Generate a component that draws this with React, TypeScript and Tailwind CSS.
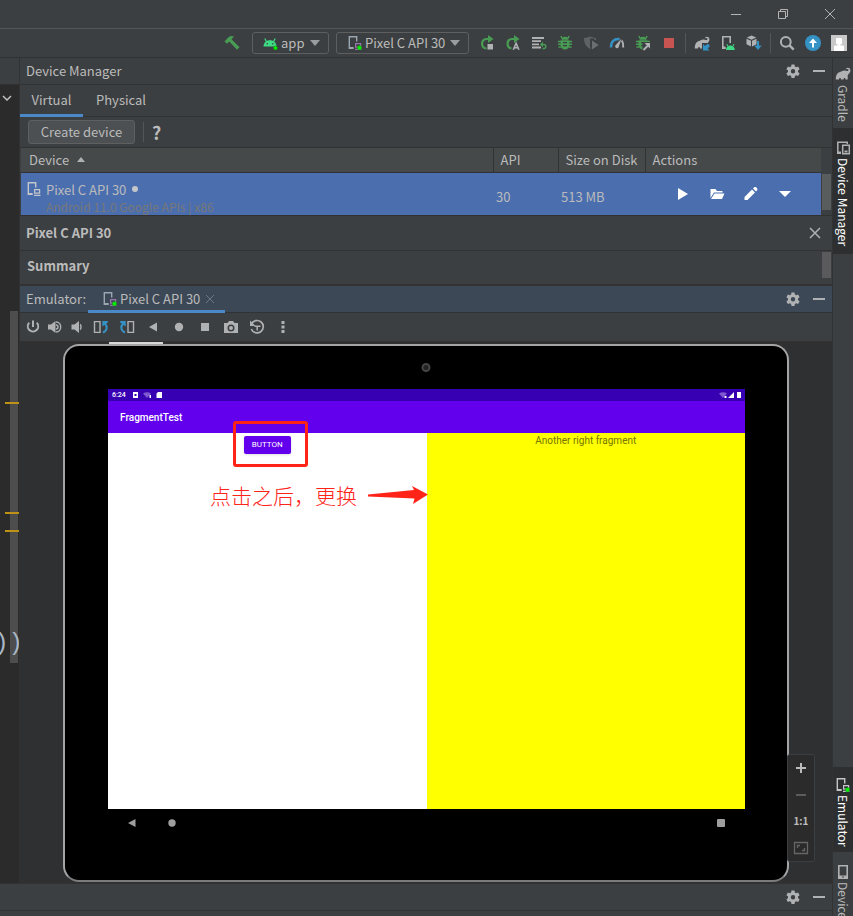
import type { ReactNode } from "react";

type IconProps = { children: ReactNode; className?: string };

function Icon({ children, className = "size-4" }: IconProps) {
  return (
    <svg viewBox="0 0 16 16" className={`${className} shrink-0`} fill="none" aria-hidden="true">
      {children}
    </svg>
  );
}

function IconButton({ label, children }: { label: string; children: ReactNode }) {
  return (
    <button type="button" aria-label={label} className="flex shrink-0 items-center justify-center">
      {children}
    </button>
  );
}

const GearIcon = () => (
  <Icon>
    <path
      fill="#afb1b3"
      fillRule="evenodd"
      d="M6.500 1.500h3l.4 2.100 1.200.7 2-.7 1.500 2.600-1.600 1.400v1.400l1.600 1.400-1.500 2.600-2-.7-1.200.7-.4 2.100h-3L6.100 13l-1.200-.7-2 .7-1.500-2.600L3 9V7.600L1.400 6.200l1.500-2.600 2 .7 1.200-.7zM8 6a2.200 2.200 0 1 0 0 4.400A2.200 2.200 0 0 0 8 6z"
    />
  </Icon>
);

const MinusIcon = () => (
  <Icon>
    <path fill="#afb1b3" d="M2 7h12v2H2z" />
  </Icon>
);

const PhoneIcon = ({ running = false, light = false }: { running?: boolean; light?: boolean }) => (
  <Icon>
    <path
      stroke={light ? "#c4c6c9" : "#9aa7b0"}
      strokeWidth="1.400"
      d="M6.500 13.200H2.300V1.800h7.400v4.700"
    />
    <path fill={light ? "#c4c6c9" : "#9aa7b0"} d="M2 12h4.500v1.900H2z" />
    <path stroke={light ? "#c4c6c9" : "#9876aa"} strokeWidth="1.200" d="M8.600 8.600h5v3.600h-5zM8 14.400h6.500" />
    {running && <circle cx="12.500" cy="12.800" r="2.200" fill="#00f400" stroke="#1c6b1c" strokeWidth=".4" />}
  </Icon>
);

const DevicesIcon = () => (
  <Icon>
    <path stroke="#afb1b3" strokeWidth="1.500" d="M6 13H2.800V2.300h9.400V4" />
    <path fill="#afb1b3" d="M2 11.500h4V14H2z" />
    <path stroke="#afb1b3" strokeWidth="1.500" d="M7.700 5.200h6.600v8.600H7.700z" />
    <path fill="#afb1b3" d="M9.500 10.500h3v2h-3z" />
  </Icon>
);

const elephantPath =
  "M.8 13.500c0-3.800 1.200-7 4.700-7.700 1.300-.3 2-1.300 3.700-1.300 1.600 0 2.600 1 3.600.4.800-.5.900-1.700.2-1.900-.5-.2-.9.1-1.200.5l-.8-.7C12 1.300 15.400 1.400 15.400 4.500c0 3-2.600 3.300-2.700 5.500v3.500h-2.200c0-1-.4-1.600-1-1.600s-1 .6-1 1.600H6c0-1-.4-1.600-1-1.600s-1 .6-1 1.600z";

const Caret = ({ color }: { color: string }) => (
  <svg viewBox="0 0 10 6" className="h-1.5 w-2.5 shrink-0" fill={color} aria-hidden="true">
    <path d="M0 0h10L5 6z" />
  </svg>
);

const BugShape = () => (
  <>
    <path fill="#499c54" d="M4.500 4.800C4.500 2.800 6 1.800 8 1.800s3.500 1 3.500 3zM3.700 5.300h8.600V10c0 2.700-1.800 4.500-4.300 4.500S3.700 12.700 3.700 10z" />
    <path
      stroke="#499c54"
      strokeWidth="1.500"
      d="M5.300 3.500 3.900 1M10.700 3.500l1.400-2.500M4.300 6.500H1M4.300 9.200H1M4.500 12H1.500M11.700 6.500H15M11.700 9.200H15M11.500 12h3"
    />
    <path stroke="#3c3f41" strokeWidth="1.200" d="M6 7.600h4M6 10.600h4" />
  </>
);

function WindowControls() {
  const control = "flex h-7 w-[47px] items-center justify-center";
  return (
    <header className="flex h-[29px] shrink-0 justify-end border-b border-[#555555]">
      <button type="button" aria-label="Minimize" className={control}>
        <svg viewBox="0 0 12 12" className="size-3" stroke="#b4b4b4"><path d="M1 6.500h10" /></svg>
      </button>
      <button type="button" aria-label="Restore" className={control}>
        <svg viewBox="0 0 12 12" className="size-3" stroke="#b4b4b4" fill="none">
          <path d="M1.500 3.500h7v7h-7zM3.500 3V1.500h7v7H9" />
        </svg>
      </button>
      <button type="button" aria-label="Close" className={control}>
        <svg viewBox="0 0 12 12" className="size-3" stroke="#b4b4b4"><path d="m1 1 10 10M11 1 1 11" /></svg>
      </button>
    </header>
  );
}

function Toolbar() {
  const combo = "flex h-[22px] items-center rounded-[3px] border border-[#5e6060]";
  return (
    <div className="flex h-[29px] shrink-0 items-center justify-end border-b border-[#323232] pr-1.5">
      <IconButton label="Build">
        <Icon>
          <path fill="#499c54" d="M.5 6.500 5 1.800c1.500-1.200 3.500-1 5-.2L7.500 4.300l8 7.900-2.500 2.600-7.700-8.200L3 8.800z" />
        </Icon>
      </IconButton>
      <button type="button" className={`${combo} ml-3 w-[77px] pl-[9px]`}>
        <Icon>
          <path fill="#3ddc84" d="M1.500 11.500C1.700 7.800 4.300 5.300 8 5.300s6.300 2.500 6.500 6.200z" />
          <path stroke="#3ddc84" strokeWidth="1.200" d="M4.600 7 2.800 3.500M11.400 7l1.800-3.500" />
          <circle cx="5.200" cy="8.700" r=".8" fill="#3c3f41" />
          <circle cx="10.800" cy="8.700" r=".8" fill="#3c3f41" />
          <circle cx="13.500" cy="13" r="2" fill="#00f400" stroke="#1c6b1c" strokeWidth=".4" />
        </Icon>
        <span className="ml-[3px]">app</span>
        <span className="mr-2 ml-auto"><Caret color="#9a9da0" /></span>
      </button>
      <button type="button" className={`${combo} ml-[7px] w-[133px] pl-[10px]`}>
        <PhoneIcon running />
        <span className="ml-0.5 whitespace-nowrap">Pixel C API 30</span>
        <span className="mr-2 ml-auto"><Caret color="#9a9da0" /></span>
      </button>
      <div className="ml-[10px] flex items-center gap-2">
        <div className="flex items-center gap-[10px]">
          <IconButton label="Apply changes and restart">
            <Icon>
              <path stroke="#499c54" strokeWidth="2.200" d="M7.500 13.500a4.800 4.800 0 0 1-.5-9.500H10" />
              <path fill="#499c54" d="M9 0l5.500 4L9 8z" />
              <path fill="#afb1b3" d="M8.500 9H14v5.500H8.500z" />
            </Icon>
          </IconButton>
          <IconButton label="Apply code changes">
            <Icon>
              <path stroke="#499c54" strokeWidth="2.200" d="M6.500 13.500A4.800 4.800 0 0 1 7 4h3" />
              <path fill="#499c54" d="M9 0l5.500 4L9 8z" />
              <path stroke="#afb1b3" strokeWidth="1.600" d="m8.300 14.700 2.800-6.500 2.800 6.500M9.500 12.700h3.500" />
            </Icon>
          </IconButton>
          <IconButton label="Run lines">
            <Icon>
              <path fill="#afb1b3" d="M1 2h12v1.900H1zM1 5.200h9v1.900H1zM1 8.400h7v1.900H1zM1 11.600h9v1.900H1z" />
              <path stroke="#499c54" strokeWidth="1.400" d="M10.500 9.500h2.300a2 2 0 0 1 0 4H11.500" />
              <path fill="#499c54" d="M12 6.800v5.400L8.900 9.500z" />
            </Icon>
          </IconButton>
          <IconButton label="Debug"><Icon><BugShape /></Icon></IconButton>
          <IconButton label="Run with coverage">
            <Icon>
              <path fill="#5f6264" d="M1 3c3 0 4-1 6-1.500C9 2 10.500 3 13 3v2H8v9C3.500 12.500 1 9 1 3z" />
              <path fill="#3c3f41" d="M7 3.500h4.500V5H8v7.500H7z" />
              <path fill="#6c6f71" d="m9 5.500 6.700 4.500L9 14.500z" />
            </Icon>
          </IconButton>
          <IconButton label="Profile">
            <Icon>
              <path stroke="#3592c4" strokeWidth="2.400" d="M2 12.500C1.800 6.500 5 3.500 10.500 4" />
              <path fill="#afb1b3" d="M12.500 3.500 9.500 12.500a1.900 1.900 0 0 1-3.300-1.700z" />
              <path stroke="#afb1b3" strokeWidth="2" d="M12.800 5.500c1.300 1.800 1.600 4 1.400 7" />
            </Icon>
          </IconButton>
          <IconButton label="Attach debugger">
            <Icon>
              <BugShape />
              <path fill="#3c3f41" d="M7.500 7H16v9H7.500z" />
              <path stroke="#afb1b3" strokeWidth="2" d="m8.500 15 5-5" />
              <path fill="#afb1b3" d="M9.500 8H15v5.500z" />
            </Icon>
          </IconButton>
          <IconButton label="Stop"><Icon><path fill="#c75450" d="M3 3h10v10H3z" /></Icon></IconButton>
        </div>
        <div className="h-5 w-px bg-[#555555]" />
        <div className="flex items-center gap-[10px]">
          <IconButton label="Sync project">
            <Icon>
              <path fill="#afb1b3" d={elephantPath} />
              <path fill="#3c3f41" d="M8 8h8v8H8z" />
              <path fill="#3592c4" d="M9 9v6.500h6.500L13.600 13.600 16 11 13.800 8.700 11 11z" />
            </Icon>
          </IconButton>
          <IconButton label="Device manager">
            <Icon>
              <path stroke="#afb1b3" strokeWidth="1.600" d="M5.500 13.200H2.800V1.800h7.400V8" />
              <path fill="#afb1b3" d="M2 11.500h3.500V14H2z" />
              <path fill="#3ddc84" d="M6 15c.2-3 1.800-4.500 4.300-4.500s4.300 1.500 4.500 4.500z" />
              <path stroke="#3ddc84" d="m8 11.500-1.200-2.500M12.800 11.500 14 9" />
            </Icon>
          </IconButton>
          <IconButton label="SDK manager">
            <Icon>
              <path fill="#afb1b3" d="m5.500.5 4.700 2-4.700 2.200-4.700-2.200zM.5 3.700 5 5.700v5.800L.5 9.300zM10.500 3.700 6 5.700v5.800l4.500-2.200z" />
              <path stroke="#3592c4" strokeWidth="2" d="M12 6v6.500" />
              <path fill="#3592c4" d="M8.300 10.500h7.400L12 15z" />
            </Icon>
          </IconButton>
        </div>
        <div className="h-5 w-px bg-[#555555]" />
        <div className="flex items-center gap-[10px]">
          <IconButton label="Search">
            <Icon>
              <circle cx="6.800" cy="6.800" r="4.900" stroke="#afb1b3" strokeWidth="2" />
              <path stroke="#afb1b3" strokeWidth="2.400" d="m10.200 10.200 4.500 4.500" />
            </Icon>
          </IconButton>
          <IconButton label="Update">
            <Icon>
              <circle cx="8" cy="8" r="8" fill="#3592c4" />
              <path fill="#fff" d="M8 3.500 12 8H9v4.500H7V8H4z" />
            </Icon>
          </IconButton>
          <IconButton label="Account">
            <Icon>
              <path fill="#c9c9c9" d="M0 0h16v16H0z" />
              <path fill="#fff" d="M5 4a1 1 0 0 1 1-1h4a1 1 0 0 1 1 1v5H9.500v1.500H12a1 1 0 0 1 1 1V16H3v-4.500a1 1 0 0 1 1-1h2.500V9H5z" />
            </Icon>
          </IconButton>
        </div>
      </div>
    </div>
  );
}

function EditorGutter() {
  const mark = "absolute right-0 h-0.5 w-3.5 bg-[#be9117]";
  return (
    <aside className="flex w-5 shrink-0 flex-col border-r border-[#323232]">
      <div className="h-[27px] shrink-0 border-b border-[#323232]" />
      <div className="relative grow overflow-hidden bg-[#2b2b2b]">
        <svg viewBox="0 0 10 6" className="mt-[10px] ml-0.5 h-1.5 w-2.5" fill="none" aria-hidden="true">
          <path stroke="#c0c0c0" strokeWidth="1.500" d="m1 1 4 4 4-4" />
        </svg>
        <div className="absolute top-[226px] right-px h-[352px] w-2 bg-[#4d4d4d]" />
        <div className={`${mark} top-[317px]`} />
        <div className={`${mark} top-[427px]`} />
        <div className={`${mark} top-[445px]`} />
        <span className="absolute top-[543px] -right-1 font-['Liberation_Mono'] text-2xl leading-8 text-[#a9b7c6]">
          ))
        </span>
      </div>
    </aside>
  );
}

function PanelActions() {
  return (
    <div className="mr-[5px] ml-auto flex items-center gap-[10px]">
      <IconButton label="Settings"><GearIcon /></IconButton>
      <IconButton label="Hide"><MinusIcon /></IconButton>
    </div>
  );
}

function DeviceManager() {
  const head = "h-6 border-l border-[#323232] pl-[7px] text-left font-normal";
  const tab = "h-8 border-b-3";
  return (
    <section className="shrink-0">
      <div className="flex h-[27px] items-center border-b border-[#323232] pl-1.5">
        <h2>Device Manager</h2>
        <PanelActions />
      </div>
      <div className="flex h-8 border-b border-[#323232]">
        <button type="button" className={`${tab} w-[63px] border-[#4a88c7]`}>Virtual</button>
        <button type="button" className={`${tab} border-transparent px-[13px]`}>Physical</button>
      </div>
      <div className="flex h-[31px] items-center border-b border-[#323232] pl-2">
        <button
          type="button"
          className="h-6 w-[107px] rounded-[3px] border border-[#5e6060] bg-[#4c5052] leading-5"
        >
          Create device
        </button>
        <div className="ml-2 h-5 w-px bg-[#555555]" />
        <button type="button" className="ml-2 text-lg font-semibold">?</button>
      </div>
      <div className="flex border-b border-[#323232] pl-px">
        <table className="grow table-fixed border-collapse">
          <colgroup>
            <col />
            <col className="w-[65px]" />
            <col className="w-[87px]" />
            <col className="w-[176px]" />
          </colgroup>
          <thead>
            <tr className="border-b border-[#323232] bg-[#45494a]">
              <th className="h-6 pl-2 text-left font-normal">
                <span className="flex items-center gap-2">
                  Device
                  <svg viewBox="0 0 8 5" className="h-[5px] w-2" fill="#afb1b3"><path d="M4 0 8 5H0z" /></svg>
                </span>
              </th>
              <th className={head}>API</th>
              <th className={`${head} whitespace-nowrap`}>Size on Disk</th>
              <th className={head}>Actions</th>
            </tr>
          </thead>
          <tbody>
            <tr className="bg-[#4b6eaf]">
              <td className="h-[43px] pl-[5px]">
                <div className="flex items-start gap-1 pt-2">
                  <PhoneIcon light />
                  <div>
                    <div className="flex items-center gap-1.5 leading-[17px]">
                      Pixel C API 30
                      <span className="size-1.5 rounded-full bg-[#c4c6c9]" />
                    </div>
                    <div className="text-xs leading-[17px] text-[#787878]">Android 11.0 Google APIs | x86</div>
                  </div>
                </div>
              </td>
              <td className="pt-1.5 pl-[3px]">30</td>
              <td className="pt-1.5 pl-[3px]">513 MB</td>
              <td>
                <div className="flex items-center gap-[18px] pl-[30px]">
                  <IconButton label="Launch">
                    <Icon><path fill="#fff" d="M3 2v12l10-6z" /></Icon>
                  </IconButton>
                  <IconButton label="Show on disk">
                    <Icon>
                      <path fill="#fff" d="M1.500 3h5L8 5h5.500v1.500H5L1.500 12zM5.500 7.500H15.500L13 13H2z" />
                    </Icon>
                  </IconButton>
                  <IconButton label="Edit">
                    <Icon>
                      <path fill="#fff" d="M1.500 11 9 3.500 12 6.500 4.500 14H1.500zM10 2.500l1.200-1.200c1.500-1 4 1.200 3 3L13 5.500z" />
                    </Icon>
                  </IconButton>
                  <IconButton label="More actions">
                    <Icon><path fill="#fff" d="M2 5h12l-6 6z" /></Icon>
                  </IconButton>
                </div>
              </td>
            </tr>
          </tbody>
        </table>
        <div className="w-[11px] shrink-0 px-px pt-[26px]">
          <div className="h-9 bg-[#5a5d5e]" />
        </div>
      </div>
      <div className="flex h-[35px] items-center justify-between border-b border-[#323232] pr-[9px] pl-1.5 font-bold">
        <h3>Pixel C API 30</h3>
        <IconButton label="Close details">
          <Icon><path stroke="#afb1b3" strokeWidth="1.500" d="m3 3 10 10M13 3 3 13" /></Icon>
        </IconButton>
      </div>
      <div className="flex h-[35px] justify-between border-b-2 border-[#323232] pt-px pr-px pl-[7px]">
        <h3 className="pt-1 font-bold">Summary</h3>
        <div className="h-[26px] w-[9px] bg-[#5a5a5c]" />
      </div>
    </section>
  );
}

function EmulatorBar() {
  return (
    <>
      <div className="flex h-[27px] shrink-0 items-center border-b border-[#323232] bg-[#3d4856] pl-1.5">
        <h2 className="w-[62px]">Emulator:</h2>
        <button
          type="button"
          className="flex h-[27px] w-[137px] items-center border-b-3 border-[#4a88c7] pt-[3px] pl-3.5"
        >
          <PhoneIcon running />
          <span className="ml-0.5 whitespace-nowrap">Pixel C API 30</span>
          <svg viewBox="0 0 8 8" className="ml-1.5 size-2" aria-hidden="true">
            <path stroke="#6e7880" d="m0 0 8 8M8 0 0 8" />
          </svg>
        </button>
        <PanelActions />
      </div>
      <div className="flex h-[29px] shrink-0 items-center gap-2 border-b border-[#323232] pl-[5px]">
        <div className="flex items-center gap-1.5">
          <IconButton label="Power">
            <Icon>
              <path stroke="#afb1b3" strokeWidth="2" d="M4.200 3.800a5.200 5.200 0 1 0 7.600 0M8 1.500v6.500" />
            </Icon>
          </IconButton>
          <IconButton label="Volume up">
            <Icon>
              <path fill="#afb1b3" d="M1 5.500h3L8.500 2v12L4 10.500H1z" />
              <path stroke="#afb1b3" strokeWidth="1.400" d="M9 6c1.500 0 2 1 2 2s-.5 2-2 2M9 3c3 0 4.700 2.500 4.700 5S12 13 9 13" />
            </Icon>
          </IconButton>
          <IconButton label="Volume down">
            <Icon>
              <path fill="#afb1b3" d="M2.500 5.500h3L10 2v12l-4.500-3.500h-3z" />
              <path stroke="#afb1b3" strokeWidth="1.500" d="M11 5.500c1.300.5 1.300 4.500 0 5" />
            </Icon>
          </IconButton>
        </div>
        <div className="flex items-center gap-[10px]">
          <IconButton label="Rotate left">
            <Icon>
              <path stroke="#afb1b3" strokeWidth="1.400" d="M1.500 2.600h5.500v10.800H1.500z" />
              <path stroke="#3592c4" strokeWidth="2" d="M10 13.500c4.500-2 4.500-6 2-9" />
              <path fill="#3592c4" d="M9.300 2h5.500v1.500L9.300 7.500z" />
            </Icon>
          </IconButton>
          <IconButton label="Rotate right">
            <Icon>
              <path stroke="#afb1b3" strokeWidth="1.400" d="M9 2.600h5.500v10.800H9z" />
              <path stroke="#3592c4" strokeWidth="2" d="M6 13.500c-4.500-2-4.500-6-2-9" />
              <path fill="#3592c4" d="M6.700 2H1.200v1.500l5.500 4z" />
            </Icon>
          </IconButton>
          <IconButton label="Back"><Icon><path fill="#afb1b3" d="M12 3.500v9L4 8z" /></Icon></IconButton>
          <IconButton label="Home"><Icon><circle cx="8" cy="8" r="4.200" fill="#afb1b3" /></Icon></IconButton>
          <IconButton label="Overview"><Icon><path fill="#afb1b3" d="M4 4h8v8H4z" /></Icon></IconButton>
          <IconButton label="Screenshot">
            <Icon>
              <path
                fill="#afb1b3"
                fillRule="evenodd"
                d="M1 4h3.500L6 2h4l1.500 2H15v10H1zm7 1.500a3.500 3.500 0 1 0 0 7 3.500 3.500 0 0 0 0-7z"
              />
              <circle cx="8" cy="9" r="2" fill="#afb1b3" />
            </Icon>
          </IconButton>
          <IconButton label="Snapshots">
            <Icon>
              <path stroke="#afb1b3" strokeWidth="1.700" d="M2.500 5A6.200 6.200 0 1 1 2.300 10" />
              <path stroke="#afb1b3" strokeWidth="1.500" d="M8.200 11.500V7.200h3.300M5.500 7.200h2.700" />
              <path fill="#afb1b3" d="M1 1.500v5.500h5.500z" />
            </Icon>
          </IconButton>
          <IconButton label="Extended controls">
            <Icon>
              <path fill="#afb1b3" d="M6.500 2h3v3h-3zM6.500 6.500h3v3h-3zM6.500 11h3v3h-3z" />
            </Icon>
          </IconButton>
        </div>
      </div>
    </>
  );
}

function AndroidScreen() {
  return (
    <div className="relative font-['Roboto',sans-serif]">
      <div className="flex h-3 items-center bg-[#3700b3] px-1 text-[7px] leading-3 font-medium text-white">
        <span>6:24</span>
        <svg viewBox="0 0 30 8" className="ml-1.5 h-2 w-[30px]" aria-hidden="true">
          <path fill="#fff" fillRule="evenodd" d="M1 1h5v6H1zm1.500 2h2v2h-2z" />
          <path fill="#7f58d0" d="M11 2.500c2.500-1.800 5.500-1.800 8 0L15 7z" />
          <path fill="#fff" d="M17.500 4h1.500v3h-1.500zM24.500 2.500 26 1h4v6h-5.500z" />
        </svg>
        <svg viewBox="0 0 24 8" className="ml-auto h-2 w-6" aria-hidden="true">
          <path fill="#7f58d0" d="M2 2.500c2.500-1.800 5.500-1.800 8 0L6 7z" />
          <path fill="#fff" d="M7.500 5h2v2h-2zM11 7l6-6v6zM20 1h4v6h-4z" />
        </svg>
      </div>
      <div className="flex h-8 items-center bg-[#6200ee] pl-3 text-[10px] font-medium text-white">
        FragmentTest
      </div>
      <div className="grid h-[376px] grid-cols-2">
        <div className="bg-white pt-[3px]">
          <button
            type="button"
            className="mx-auto block h-[18px] w-[47px] rounded-xs bg-[#6200ee] text-[8px] leading-[18px] text-white shadow-sm"
          >
            BUTTON
          </button>
        </div>
        <div className="bg-[#ffff00] pt-0.5 text-center text-[10px] leading-3 text-[#757500]">
          Another right fragment
        </div>
      </div>

      {/* Red notes on top of the app */}
      <div className="absolute top-8 left-[125px] h-[46px] w-[75px] rounded-[3px] border-3 border-[#ff2318]" />
      <div className="absolute top-[91px] left-[102px] flex items-center gap-[10px]">
        <span className="font-['Noto_Sans_CJK_SC',sans-serif] text-[21px] leading-[30px] font-light whitespace-nowrap text-[#ff2318]">
          点击之后，更换
        </span>
        <svg viewBox="0 0 62 18" className="h-[18px] w-[62px]" fill="#ff2318" aria-hidden="true">
          <path d="M1 8.500 47 4 45 0l16 8.500L46 18l1.500-5.500L1 10.500z" />
        </svg>
      </div>
    </div>
  );
}

function Emulator() {
  return (
    <section className="relative grow overflow-hidden bg-[#2f3032] px-[43px] pt-0.5">
      <div className="absolute top-0 left-[89px] h-0.5 w-[54px] bg-[#d8d8d8]" />
      <div className="relative h-[538px] rounded-[16px] border-2 border-[#a4a4a4] border-b-[#7c7c7c] bg-black pt-[43px] pr-[42px] pl-[43px]">
        <span className="absolute top-[17px] left-1/2 size-[9px] -translate-x-1/2 rounded-full border-2 border-[#454545] bg-[#222222]" />
        <AndroidScreen />
        <div className="flex h-7 items-center px-4">
          <IconButton label="Back">
            <Icon><path fill="#9e9e9e" d="M11.500 4v8L4 8z" /></Icon>
          </IconButton>
          <div className="ml-6">
            <IconButton label="Home"><Icon><circle cx="8" cy="8" r="3.700" fill="#9e9e9e" /></Icon></IconButton>
          </div>
          <div className="ml-auto">
            <IconButton label="Recents"><Icon><rect x="4" y="4" width="8" height="8" rx="1" fill="#9e9e9e" /></Icon></IconButton>
          </div>
        </div>
      </div>
      <div className="absolute top-[412px] right-[17px] flex h-[108px] w-7 flex-col items-center justify-around rounded-[3px] border border-[#3c3f41] bg-[#2b2b2b]">
        <IconButton label="Zoom in">
          <Icon><path fill="#bbb" d="M7 3h2v4h4v2H9v4H7V9H3V7h4z" /></Icon>
        </IconButton>
        <IconButton label="Zoom out">
          <Icon><path fill="#5c5c5c" d="M3 7h10v2H3z" /></Icon>
        </IconButton>
        <button type="button" className="text-[10px] leading-4 font-bold">1:1</button>
        <IconButton label="Fit to window">
          <Icon>
            <path stroke="#666" strokeWidth="1.300" d="M1.500 2.500h13v11h-13zM4.500 8V5.500H7M11.500 8v2.500H9" />
          </Icon>
        </IconButton>
      </div>
    </section>
  );
}

function ToolStrip() {
  const tab = "flex w-full shrink-0 flex-col items-center";
  const text = "[writing-mode:vertical-rl] whitespace-nowrap text-xs leading-4";
  return (
    <nav className="flex w-[21px] shrink-0 flex-col justify-between border-l border-[#323232]">
      <div>
        <button type="button" className={`${tab} h-[70px] gap-[3px] pt-2`}>
          <Icon><path fill="#afb1b3" d={elephantPath} /></Icon>
          <span className={text}>Gradle</span>
        </button>
        <button type="button" className={`${tab} h-[126px] gap-0.5 bg-[#2d2f30] pt-3 text-white`}>
          <DevicesIcon />
          <span className={text}>Device Manager</span>
        </button>
      </div>
      <div className="h-[149px] overflow-hidden">
        <button type="button" className={`${tab} h-[85px] gap-0.5 bg-[#2d2f30] pt-[10px] text-white`}>
          <PhoneIcon running light />
          <span className={text}>Emulator</span>
        </button>
        <button type="button" className={`${tab} gap-0.5 pt-3`}>
          <Icon>
            <path stroke="#afb1b3" strokeWidth="1.600" d="M3.800 1.800h8.400v12.400H3.800z" />
            <path fill="#afb1b3" d="M3 11.500h10V15H3z" />
            <path fill="#3c3f41" d="M7 12.500h2v1H7z" />
          </Icon>
          <span className={text}>Device File Explorer</span>
        </button>
      </div>
    </nav>
  );
}

export default function App() {
  return (
    <div className="flex h-screen flex-col overflow-hidden bg-[#3c3f41] font-['Noto_Sans_CJK_SC',sans-serif] text-[13px] text-[#bbbbbb]">
      <WindowControls />
      <Toolbar />
      <div className="flex min-h-0 grow">
        <div className="flex min-w-0 grow flex-col">
          <div className="flex min-h-0 grow">
            <EditorGutter />
            <main className="flex min-w-0 grow flex-col">
              <DeviceManager />
              <EmulatorBar />
              <Emulator />
            </main>
          </div>
          <div className="flex h-[33px] shrink-0 flex-col border-t border-[#323232]">
            <div className="flex h-[27px] shrink-0 items-center border-b border-[#323232]">
              <PanelActions />
            </div>
          </div>
        </div>
        <ToolStrip />
      </div>
    </div>
  );
}
